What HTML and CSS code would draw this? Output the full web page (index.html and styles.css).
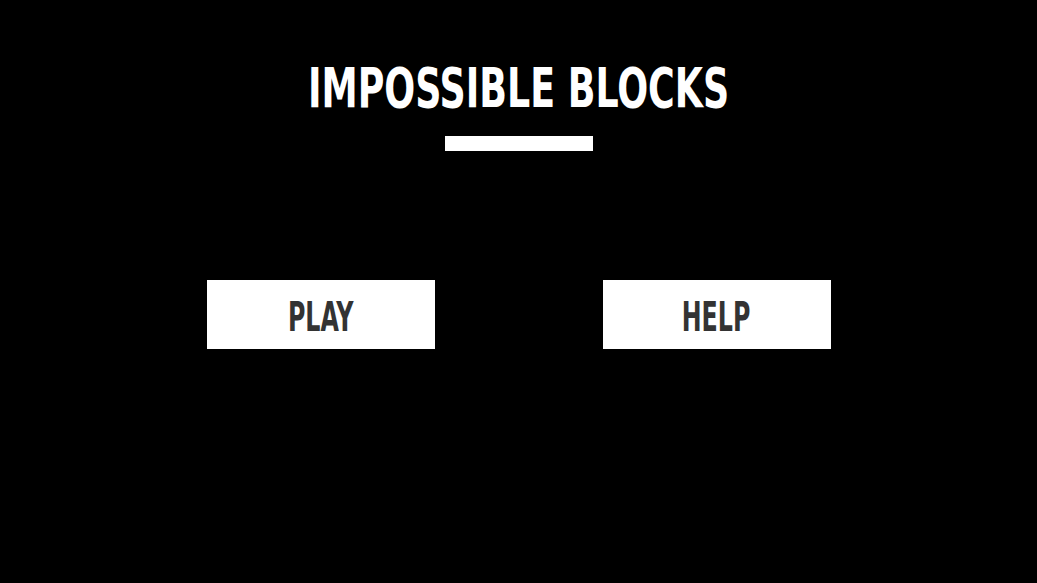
FILE: index.html
```html
<!DOCTYPE html>
<html lang="en">
<head>
<meta charset="utf-8">
<title>Impossible Blocks</title>
<link rel="stylesheet" href="styles.css">
</head>
<body>
<main class="menu">
  <header class="menu-head">
    <h1 class="title"><span class="squeeze">IMPOSSIBLE BLOCKS</span></h1>
    <div class="rule"></div>
  </header>
  <nav class="actions">
    <button class="btn" type="button"><span class="squeeze narrow">PLAY</span></button>
    <button class="btn" type="button"><span class="squeeze narrow">HELP</span></button>
  </nav>
</main>
</body>
</html>
```

FILE: styles.css
```css
html, body {
  margin: 0;
  height: 100%;
  background: #000;
}

.menu {
  display: flex;
  flex-direction: column;
  align-items: center;
  padding-top: 56px;
  font-family: "DejaVu Sans", sans-serif;
  font-stretch: condensed;
  font-weight: 700;
}

.menu-head {
  display: flex;
  flex-direction: column;
  align-items: center;
}

.title {
  margin: 0;
  color: #fff;
  font-size: 55px;
  line-height: 64px;
  white-space: nowrap;
}

/* condensed display face: squeeze the glyphs horizontally */
.squeeze {
  display: inline-block;
  transform: scaleX(0.735);
}

.squeeze.narrow {
  transform: scaleX(0.66);
}

.rule {
  width: 148px;
  height: 15px;
  background: #fff;
  margin-top: 16px;
  margin-left: 1px;
}

.actions {
  display: flex;
  gap: 168px;
  margin-top: 129px;
}

.btn {
  width: 228px;
  height: 69px;
  border: 0;
  border-radius: 0;
  background: #fff;
  color: #333;
  font: inherit;
  font-size: 40px;
  padding: 4px 0 0;
  display: flex;
  align-items: center;
  justify-content: center;
}
```
